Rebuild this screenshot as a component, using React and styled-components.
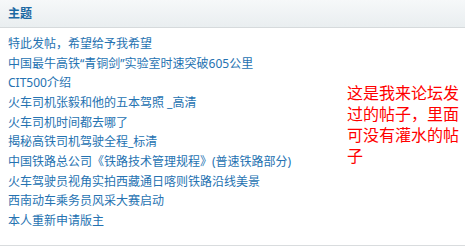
import styled, { createGlobalStyle } from 'styled-components';

const GlobalStyle = createGlobalStyle`
  html, body {
    margin: 0;
    padding: 0;
    background: #fff;
  }
  body {
    font-family: "Noto Sans", "Noto Sans CJK SC", sans-serif;
  }
`;

const Panel = styled.div`
  width: 465px;
  height: 246px;
  border-bottom: 1px solid #d9dcde;
  box-sizing: border-box;
  display: flex;
  flex-direction: column;
`;

const Header = styled.div`
  height: 27px;
  border-bottom: 1px solid #d6dadc;
  background: linear-gradient(to bottom, #f6f8f9, #e9eef0);
  display: flex;
  align-items: center;
  padding-left: 8px;
`;

const Title = styled.span`
  font-size: 12px;
  font-weight: bold;
  color: #1a68a3;
  line-height: 1;
  margin-top: 1px;
`;

const Body = styled.div`
  flex: 1;
  display: flex;
`;

const List = styled.ul`
  flex: 1;
  list-style: none;
  margin: 0;
  padding: 6px 0 0 8px;
`;

const Item = styled.li`
  font-size: 12px;
  line-height: 19.67px;
  height: 19.67px;
  white-space: nowrap;
  color: #2572b1;
  cursor: pointer;
`;

const Note = styled.div`
  width: 112px;
  margin-right: 6px;
  padding-top: 54px;
  font-family: "Noto Sans CJK SC", sans-serif;
  font-size: 16px;
  line-height: 21px;
  color: #ff0000;
  word-break: break-all;
`;

const topics = [
  '特此发帖，希望给予我希望',
  '中国最牛高铁“青铜剑”实验室时速突破605公里',
  'CIT500介绍',
  '火车司机张毅和他的五本驾照 _高清',
  '火车司机时间都去哪了',
  '揭秘高铁司机驾驶全程_标清',
  '中国铁路总公司《铁路技术管理规程》(普速铁路部分)',
  '火车驾驶员视角实拍西藏通日喀则铁路沿线美景',
  '西南动车乘务员风采大赛启动',
  '本人重新申请版主',
];

export default function App() {
  return (
    <>
      <GlobalStyle />
      <Panel>
        <Header>
          <Title>主题</Title>
        </Header>
        <Body>
          <List>
            {topics.map((t) => (
              <Item key={t}>{t}</Item>
            ))}
          </List>
          <Note>这是我来论坛发过的帖子，里面可没有灌水的帖子</Note>
        </Body>
      </Panel>
    </>
  );
}
